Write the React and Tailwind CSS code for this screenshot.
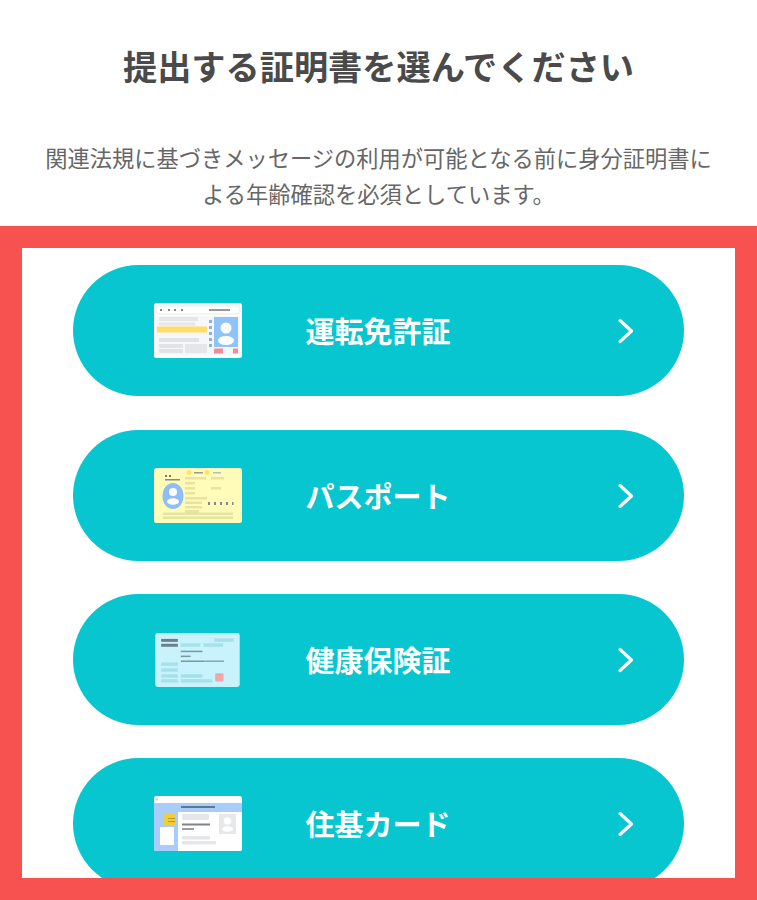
import React from 'react';

const jp = { fontFamily: '"Noto Sans CJK JP", "Noto Sans", sans-serif' };

function LicenseCard() {
  return (
    <svg className="blur-[0.4px]" width="88" height="55" viewBox="0 0 88 55">
      <rect x="0" y="0" width="88" height="55" rx="2.5" fill="#ffffff" />
      <rect x="2" y="3" width="84" height="8" rx="2" fill="#ffffff" stroke="#d5dbe0" strokeWidth="0.6" />
      <rect x="6" y="6" width="2" height="2" fill="#888" />
      <rect x="14" y="6" width="2" height="2" fill="#888" />
      <rect x="20" y="6" width="2" height="2" fill="#888" />
      <rect x="27" y="6" width="2" height="2" fill="#888" />
      <rect x="55" y="6" width="21" height="2" fill="#999" />
      <rect x="2" y="13" width="84" height="39" fill="#f5f7f8" />
      <rect x="5" y="14" width="39" height="4" fill="#e4e6e8" />
      <rect x="5" y="19.5" width="36" height="3" fill="#e4e6e8" />
      <rect x="3" y="23.5" width="50" height="6" fill="#ffdc6b" />
      <rect x="5" y="35" width="40" height="4" fill="#e0e3e6" />
      <rect x="5" y="41" width="24" height="4" fill="#e0e3e6" />
      <rect x="5" y="46" width="24" height="4" fill="#e0e3e6" />
      <rect x="31" y="41" width="22" height="9" fill="#e4e6e8" />
      <rect x="55" y="17" width="3" height="3" fill="#7fb6ea" />
      <rect x="55" y="23" width="3" height="3" fill="#7fb6ea" />
      <rect x="55" y="29" width="3" height="3" fill="#7fb6ea" />
      <rect x="55" y="35" width="3" height="3" fill="#7fb6ea" />
      <rect x="55" y="41" width="3" height="3" fill="#7fb6ea" />
      <rect x="60" y="14" width="24" height="30" fill="#8fc3fa" />
      <circle cx="72" cy="25" r="5.5" fill="#ffffff" />
      <ellipse cx="72" cy="37.5" rx="8" ry="4.5" fill="#ffffff" />
      <rect x="60" y="45.5" width="9" height="5" fill="#ee8d96" />
      <rect x="79" y="45.5" width="5" height="5" fill="#ee8d96" />
    </svg>
  );
}

function PassportCard() {
  return (
    <svg className="blur-[0.4px]" width="88" height="55" viewBox="0 0 88 55">
      <rect x="0" y="0" width="88" height="55" rx="2.5" fill="#fffbb8" />
      <rect x="11" y="7" width="2" height="2" fill="#777" />
      <rect x="15" y="7" width="2" height="2" fill="#777" />
      <rect x="11" y="11" width="15" height="1.5" fill="#888" />
      <circle cx="35" cy="4.5" r="2.5" fill="#ffe26e" />
      <circle cx="53" cy="4.5" r="2.5" fill="#ffe26e" />
      <rect x="40" y="4" width="9" height="1.5" fill="#999" />
      <rect x="59" y="4" width="8" height="1.5" fill="#bbb" />
      <ellipse cx="19" cy="28" rx="10.5" ry="13" fill="#8fbdf5" />
      <circle cx="19" cy="24" r="4" fill="#ffffff" />
      <ellipse cx="19" cy="33.5" rx="6" ry="3.2" fill="#ffffff" />
      <rect x="31" y="9" width="21" height="2.5" fill="#e8e3a0" />
      <rect x="57" y="9" width="13" height="2.5" fill="#e8e3a0" />
      <rect x="31" y="14" width="10" height="2.5" fill="#e8e3a0" />
      <rect x="31" y="19" width="10" height="2.5" fill="#e8e3a0" />
      <rect x="57" y="19" width="10" height="2.5" fill="#e8e3a0" />
      <rect x="31" y="24" width="10" height="2.5" fill="#e8e3a0" />
      <rect x="31" y="29" width="11" height="2.5" fill="#e8e3a0" />
      <rect x="42" y="29" width="11" height="2.5" fill="#e8e3a0" />
      <rect x="31" y="33.5" width="17" height="2.5" fill="#e8e3a0" />
      <rect x="31" y="38" width="17" height="2.5" fill="#e8e3a0" />
      <rect x="31" y="42" width="14" height="4" fill="#e8e3a0" />
      <rect x="54" y="34" width="2" height="3" fill="#888" />
      <rect x="60" y="34" width="2" height="3" fill="#888" />
      <rect x="66" y="34" width="2" height="3" fill="#888" />
      <rect x="72" y="34" width="2" height="3" fill="#888" />
      <rect x="78" y="34" width="1.5" height="3" fill="#888" />
      <rect x="9" y="44.5" width="70" height="2.5" fill="#e8e3a0" />
      <rect x="9" y="48.5" width="70" height="2.5" fill="#e8e3a0" />
    </svg>
  );
}

function InsuranceCard() {
  return (
    <svg className="blur-[0.4px] mt-[1px]" width="85" height="54" viewBox="0 0 86 55">
      <rect x="0" y="0" width="86" height="55" rx="2.5" fill="#c8f3fc" />
      <rect x="6" y="6" width="17" height="3" fill="#6b7f88" />
      <rect x="6" y="11" width="17" height="3" fill="#6b7f88" />
      <rect x="26" y="10.5" width="20" height="3.5" fill="#a6e1ea" />
      <rect x="49" y="10.5" width="20" height="3.5" fill="#a6e1ea" />
      <rect x="60" y="5.5" width="20" height="3.5" fill="#a6e1ea" />
      <rect x="26" y="18" width="22" height="1.5" fill="#7b949d" />
      <rect x="26" y="23" width="10" height="1.5" fill="#7b949d" />
      <rect x="26" y="28" width="24" height="1.5" fill="#7b949d" />
      <rect x="50" y="28" width="20" height="1.5" fill="#8ba4ad" />
      <rect x="6" y="30" width="17" height="3.5" fill="#a6e1ea" />
      <rect x="6" y="36" width="17" height="3.5" fill="#a6e1ea" />
      <rect x="6" y="42" width="17" height="3.5" fill="#a6e1ea" />
      <rect x="26" y="42" width="22" height="3.5" fill="#a6e1ea" />
      <rect x="6" y="47" width="17" height="3.5" fill="#a6e1ea" />
      <rect x="26" y="47" width="32" height="3.5" fill="#a6e1ea" />
      <rect x="61" y="41" width="8.5" height="8.5" rx="1.5" fill="#f4a5aa" />
    </svg>
  );
}

function ResidentCard() {
  return (
    <svg className="blur-[0.4px]" width="88" height="55" viewBox="0 0 88 55">
      <rect x="0" y="0" width="88" height="55" rx="2.5" fill="#ffffff" />
      <path d="M0 7 H88 V52.5 a2.5 2.5 0 0 1 -2.5 2.5 H2.5 a2.5 2.5 0 0 1 -2.5 -2.5 Z" fill="#a9cdfa" />
      <rect x="2" y="2.5" width="2" height="2" fill="#c9cdd1" />
      <rect x="27" y="10" width="34" height="2" fill="#5f7890" />
      <path d="M24 16 H88 V52.5 a2.5 2.5 0 0 1 -2.5 2.5 H24 Z" fill="#ffffff" />
      <rect x="10" y="18" width="11" height="11" rx="0.5" fill="#f2cd3a" />
      <rect x="14" y="22" width="7" height="1" fill="#b79a25" />
      <rect x="14" y="25" width="7" height="1" fill="#b79a25" />
      <rect x="6" y="31" width="14" height="18" rx="0.5" fill="#ffffff" />
      <rect x="28" y="18" width="27" height="6" fill="#e4e6e8" />
      <rect x="28" y="27.5" width="28" height="2" fill="#7e8488" />
      <rect x="28" y="32" width="12" height="2" fill="#9b9fa4" />
      <rect x="28" y="40" width="28" height="3.5" fill="#e4e6e8" />
      <rect x="28" y="45" width="34" height="3.5" fill="#e4e6e8" />
      <rect x="65" y="18" width="17" height="20" fill="#e6e8ea" />
      <circle cx="73.5" cy="25" r="3.8" fill="#ffffff" />
      <ellipse cx="73.5" cy="33" rx="5.5" ry="2.8" fill="#ffffff" />
    </svg>
  );
}

function DocButton({ card, label }) {
  return (
    <button className="w-[611px] h-[131px] shrink-0 mx-[51px] rounded-full bg-[#08c6d0] flex items-center text-white">
      <div className="w-[88px] ml-[80.5px] flex justify-center">{card}</div>
      <span className="ml-[64px] text-[29px] font-semibold leading-none">{label}</span>
      <svg className="ml-auto mr-[49.5px] mt-[1px]" width="18" height="26" viewBox="0 0 18 26" fill="none">
        <path d="M3 2.5 L14.5 13 L3 23.5" stroke="#ffffff" strokeWidth="3.2" strokeLinecap="round" strokeLinejoin="round" />
      </svg>
    </button>
  );
}

export default function App() {
  return (
    <div className="w-[757px] h-[900px] bg-white overflow-hidden flex flex-col" style={jp}>
      <h1 className="pt-[40px] h-[113px] text-center text-[34.2px] leading-[50px] font-bold text-[#4a4a4a]">
        提出する証明書を選んでください
      </h1>
      <p className="mt-[26px] h-[87px] px-[30px] text-center text-[22.25px] leading-[36px] text-[#666666]">
        関連法規に基づきメッセージの利用が可能となる前に身分証明書に<br />
        よる年齢確認を必須としています。
      </p>
      <div className="flex-1 bg-[#f75250] p-[22px] min-h-0">
        <div className="h-full bg-white overflow-hidden flex flex-col gap-[33.4px] pt-[17.2px]">
          <DocButton card={<LicenseCard />} label="運転免許証" />
          <DocButton card={<PassportCard />} label="パスポート" />
          <DocButton card={<InsuranceCard />} label="健康保険証" />
          <DocButton card={<ResidentCard />} label="住基カード" />
        </div>
      </div>
    </div>
  );
}
